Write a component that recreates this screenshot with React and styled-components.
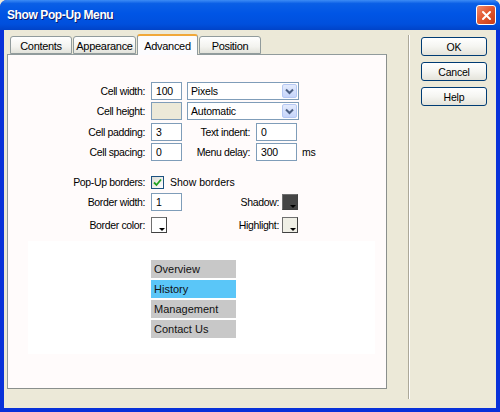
import React from "react"
import styled, { createGlobalStyle } from "styled-components"

const GlobalStyle = createGlobalStyle`
  html, body {
    margin: 0;
    padding: 0;
    background: #ece9d8;
  }
  body {
    font-family: "Liberation Sans", Arial, sans-serif;
    font-size: 10.5px;
    color: #000;
  }
`

const Window = styled.div`
  width: 500px;
  height: 412px;
  box-sizing: border-box;
  display: flex;
  flex-direction: column;
  background: #0831d9;
  padding: 0 4px 4px 4px;
  border-radius: 7px 7px 0 0;
  overflow: hidden;
`

const TitleBar = styled.div`
  height: 30px;
  margin: 0 -4px;
  padding: 0 4px 0 7px;
  display: flex;
  align-items: center;
  justify-content: space-between;
  background: linear-gradient(
    to bottom,
    #3d8cf5 0%,
    #0a5fe6 12%,
    #0055e5 45%,
    #0050dd 80%,
    #0043c8 100%
  );
`

const Title = styled.div`
  color: #fff;
  font-weight: bold;
  font-size: 12px;
  letter-spacing: -0.4px;
  text-shadow: 1px 1px 0 #0a1a6e;
`

const CloseButton = styled.div`
  width: 20px;
  height: 20px;
  box-sizing: border-box;
  border: 1px solid #fff;
  border-radius: 3px;
  background: linear-gradient(135deg, #f08a6c 0%, #e35a32 45%, #c83b15 100%);
  display: flex;
  align-items: center;
  justify-content: center;
`

const Client = styled.div`
  flex: 1;
  background: #ece9d8;
  display: flex;
`

const LeftColumn = styled.div`
  width: 380px;
  margin-left: 3px;
  padding-top: 3px;
  display: flex;
  flex-direction: column;
`

const TabRow = styled.div`
  height: 21px;
  padding-left: 3px;
  display: flex;
  align-items: flex-end;
  position: relative;
  z-index: 1;
`

const Tab = styled.div`
  width: ${(p) => p.$w}px;
  height: ${(p) => (p.$active ? 21 : 18)}px;
  box-sizing: border-box;
  margin-right: 1px;
  margin-bottom: ${(p) => (p.$active ? -1 : 0)}px;
  border: 1px solid #919b9c;
  border-bottom: ${(p) => (p.$active ? "none" : "1px solid #919b9c")};
  border-top: ${(p) => (p.$active ? "2px solid #f0a83a" : "1px solid #919b9c")};
  border-radius: 3px 3px 0 0;
  background: ${(p) =>
    p.$active
      ? "#fcfcfe"
      : "linear-gradient(to bottom, #ffffff 0%, #f3f3ef 60%, #e2e2da 100%)"};
  display: flex;
  align-items: center;
  justify-content: center;
  padding-top: ${(p) => (p.$active ? 0 : 1)}px;
  font-size: 11px;
  letter-spacing: -0.3px;
`

const Panel = styled.div`
  height: 335px;
  box-sizing: border-box;
  border: 1px solid #919b9c;
  border-right-color: #8a8f8c;
  border-bottom-color: #8a8f8c;
  background: #fffbfb;
  padding-top: 26px;
  display: flex;
  flex-direction: column;
`

const Row = styled.div`
  height: 20px;
  display: flex;
  align-items: center;
  margin-top: ${(p) => p.$mt || 0}px;
`

const Label = styled.div`
  width: ${(p) => p.$w}px;
  flex-shrink: 0;
  text-align: right;
  white-space: nowrap;
  letter-spacing: -0.35px;
  margin-right: ${(p) => (p.$gap == null ? 6 : p.$gap)}px;
`

const TextInput = styled.div`
  width: ${(p) => p.$w}px;
  flex-shrink: 0;
  height: 18px;
  box-sizing: border-box;
  border: 1px solid #7f9db9;
  background: ${(p) => (p.$disabled ? "#ece9d8" : "#fff")};
  padding-left: 4px;
  display: flex;
  align-items: center;
  letter-spacing: -0.2px;
`

const Select = styled.div`
  width: 112px;
  height: 18px;
  margin-left: 5px;
  box-sizing: border-box;
  border: 1px solid #7f9db9;
  background: #fff;
  display: flex;
  align-items: center;
  justify-content: space-between;
  padding-left: 3px;
  letter-spacing: -0.2px;
`

const SelectArrow = styled.div`
  width: 15px;
  height: 14px;
  margin-right: 1px;
  box-sizing: border-box;
  border: 1px solid #b5c8f3;
  border-radius: 2px;
  background: linear-gradient(to bottom, #e3ebfd 0%, #c6d5fa 100%);
  display: flex;
  align-items: center;
  justify-content: center;
`

const Unit = styled.div`
  margin-left: 5px;
  letter-spacing: -0.2px;
`

const Check = styled.div`
  width: 13px;
  height: 13px;
  box-sizing: border-box;
  border: 1px solid #1c5180;
  background: linear-gradient(135deg, #dcdcd6 0%, #ffffff 100%);
  display: flex;
  align-items: center;
  justify-content: center;
  margin-right: 6px;
`

const Spacer = styled.div`
  flex: 1;
`

const Swatch = styled.div`
  width: 16px;
  height: 16px;
  flex-shrink: 0;
  box-sizing: border-box;
  border: 1px solid #6f6f6f;
  border-right-color: #404040;
  border-bottom-color: #404040;
  background: ${(p) => p.$color};
  position: relative;
`

const SwatchArrow = styled.div`
  position: absolute;
  right: 1px;
  bottom: 1px;
  width: 0;
  height: 0;
  border-left: 3px solid transparent;
  border-right: 3px solid transparent;
  border-top: 3px solid #000;
`

const ColorGroup = styled.div`
  width: 90px;
  flex-shrink: 0;
  display: flex;
  align-items: center;
  justify-content: flex-end;
  margin-right: 88px;
`

const Preview = styled.div`
  margin: 6px 0 0 20px;
  width: 347px;
  height: 113px;
  background: #fff;
  padding: 19px 0 0 123px;
  box-sizing: border-box;
  display: flex;
  flex-direction: column;
  gap: 2px;
`

const MenuItem = styled.div`
  width: 85px;
  height: 18px;
  box-sizing: border-box;
  padding-left: 3px;
  display: flex;
  align-items: center;
  font-size: 11px;
  background: ${(p) => (p.$hover ? "#5ac6f8" : "#c8c8c8")};
  color: #111;
`

const Separator = styled.div`
  width: 1px;
  height: 364px;
  margin: 5px 0 0 21px;
  background: #aca899;
  border-right: 1px solid #fff;
`

const ButtonColumn = styled.div`
  margin: 7px 0 0 11px;
  display: flex;
  flex-direction: column;
  gap: 6px;
`

const Button = styled.div`
  width: 66px;
  height: 19px;
  box-sizing: border-box;
  border: 1px solid #003c74;
  border-radius: 3px;
  background: linear-gradient(to bottom, #ffffff 0%, #f5f5f1 50%, #e4e3da 100%);
  display: flex;
  align-items: center;
  justify-content: center;
  letter-spacing: -0.2px;
`

const Chevron = () => (
  <svg width="9" height="7" viewBox="0 0 9 7">
    <path d="M1 1.5 L4.5 5 L8 1.5" fill="none" stroke="#4d6185" strokeWidth="2" />
  </svg>
)

const CloseIcon = () => (
  <svg width="11" height="11" viewBox="0 0 11 11">
    <path d="M2 2 L9 9 M9 2 L2 9" stroke="#fff" strokeWidth="2" strokeLinecap="round" />
  </svg>
)

const CheckMark = () => (
  <svg width="9" height="9" viewBox="0 0 9 9">
    <path d="M1 4.5 L3.5 7 L8 1.5" fill="none" stroke="#21a121" strokeWidth="1.8" />
  </svg>
)

const tabs = [
  { name: "Contents", w: 62 },
  { name: "Appearance", w: 63 },
  { name: "Advanced", w: 61, active: true },
  { name: "Position", w: 62 },
]

const menuItems = ["Overview", "History", "Management", "Contact Us"]

export default function App() {
  return (
    <>
      <GlobalStyle />
      <Window>
        <TitleBar>
          <Title>Show Pop-Up Menu</Title>
          <CloseButton>
            <CloseIcon />
          </CloseButton>
        </TitleBar>
        <Client>
          <LeftColumn>
            <TabRow>
              {tabs.map((t) => (
                <Tab key={t.name} $w={t.w} $active={t.active}>
                  {t.name}
                </Tab>
              ))}
            </TabRow>
            <Panel>
              <Row>
                <Label $w={137}>Cell width:</Label>
                <TextInput $w={31}>100</TextInput>
                <Select>
                  Pixels
                  <SelectArrow>
                    <Chevron />
                  </SelectArrow>
                </Select>
              </Row>
              <Row>
                <Label $w={137}>Cell height:</Label>
                <TextInput $w={31} $disabled />
                <Select>
                  Automatic
                  <SelectArrow>
                    <Chevron />
                  </SelectArrow>
                </Select>
              </Row>
              <Row $mt={1}>
                <Label $w={137}>Cell padding:</Label>
                <TextInput $w={31}>3</TextInput>
                <Label $w={68}>Text indent:</Label>
                <TextInput $w={41}>0</TextInput>
              </Row>
              <Row>
                <Label $w={137}>Cell spacing:</Label>
                <TextInput $w={31}>0</TextInput>
                <Label $w={68}>Menu delay:</Label>
                <TextInput $w={41}>300</TextInput>
                <Unit>ms</Unit>
              </Row>
              <Row $mt={10}>
                <Label $w={137}>Pop-Up borders:</Label>
                <Check>
                  <CheckMark />
                </Check>
                <span>Show borders</span>
              </Row>
              <Row>
                <Label $w={137}>Border width:</Label>
                <TextInput $w={31}>1</TextInput>
                <Spacer />
                <ColorGroup>
                  <Label $w={60} $gap={3}>Shadow:</Label>
                  <Swatch $color="#454545">
                    <SwatchArrow />
                  </Swatch>
                </ColorGroup>
              </Row>
              <Row $mt={3}>
                <Label $w={137}>Border color:</Label>
                <Swatch $color="#fff">
                  <SwatchArrow />
                </Swatch>
                <Spacer />
                <ColorGroup>
                  <Label $w={60} $gap={3}>Highlight:</Label>
                  <Swatch $color="#f0efe6">
                    <SwatchArrow />
                  </Swatch>
                </ColorGroup>
              </Row>
              <Preview>
                {menuItems.map((m) => (
                  <MenuItem key={m} $hover={m === "History"}>
                    {m}
                  </MenuItem>
                ))}
              </Preview>
            </Panel>
          </LeftColumn>
          <Separator />
          <ButtonColumn>
            <Button>OK</Button>
            <Button>Cancel</Button>
            <Button>Help</Button>
          </ButtonColumn>
        </Client>
      </Window>
    </>
  )
}
